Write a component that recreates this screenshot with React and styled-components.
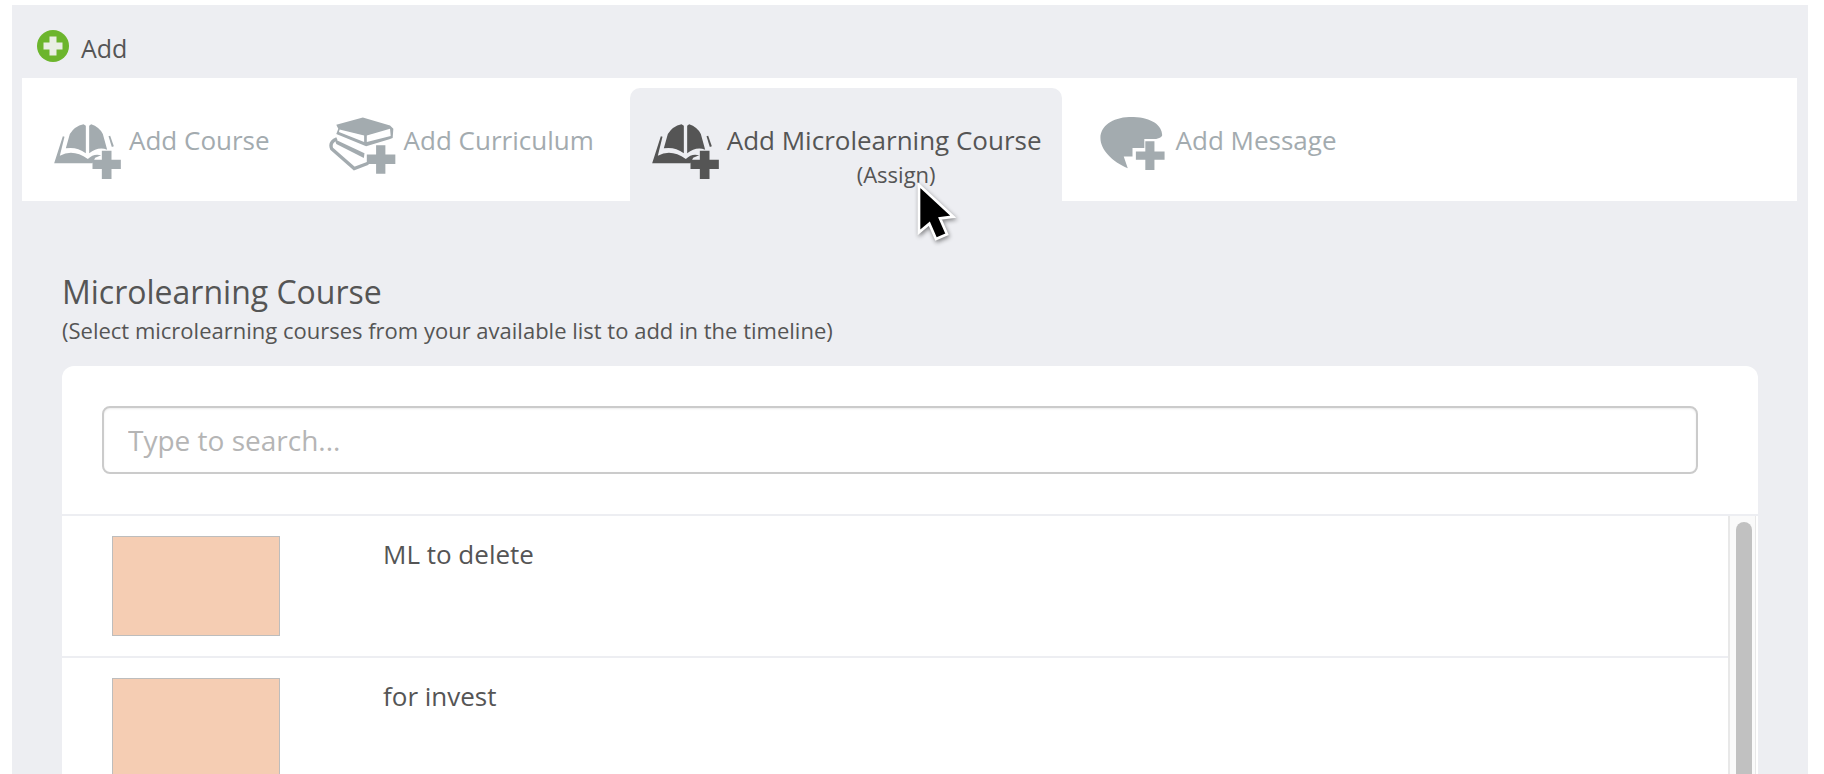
import styled, { createGlobalStyle } from "styled-components";

const GlobalStyle = createGlobalStyle`
  html, body {
    margin: 0;
    height: 100%;
    overflow: hidden;
    background: #fff;
  }
  body {
    font-family: "Open Sans", "Liberation Sans", sans-serif;
    color: #555;
  }
`;

const Page = styled.div`
  padding: 5px 16px 0 12px;
`;

const Panel = styled.div`
  background: #edeef2;
  height: 769px;
  overflow: hidden;
`;

const Header = styled.div`
  display: flex;
  align-items: flex-start;
  gap: 12px;
  height: 48px;
  padding: 25px 0 0 25px;
`;

const HeaderLabel = styled.span`
  font-size: 25px;
  line-height: 32px;
  margin-top: 2px;
`;

const TabBar = styled.div`
  display: flex;
  gap: 16px;
  height: 113px;
  margin: 0 11px 0 10px;
  padding: 10px 0 0 10px;
  background: #fff;
`;

const Tab = styled.div`
  position: relative;
  display: flex;
  padding: 37px 20px 0 22px;
  color: ${(p) => (p.$active ? "#555" : "#a3abaf")};
  background: ${(p) => (p.$active ? "#edeef2" : "transparent")};
  border-radius: 10px 10px 0 0;
`;

const TabIcon = styled.svg`
  flex: none;
  margin-top: ${(p) => p.$top}px;
  margin-right: ${(p) => p.$gap}px;
  fill: currentColor;
`;

const TabText = styled.div`
  display: flex;
  flex-direction: column;
  align-items: center;
`;

const TabTitle = styled.span`
  font-size: 26px;
  line-height: 30px;
  white-space: nowrap;
`;

const TabSub = styled.span`
  font-size: 22px;
  line-height: 24px;
  margin-top: 7px;
  padding-left: 24px;
`;

const Pointer = styled.svg`
  position: absolute;
  left: 270px;
  top: 87px;
  filter: drop-shadow(1px 2px 2px rgba(0, 0, 0, 0.45));
`;

const Section = styled.div`
  padding: 73px 50px 0;
`;

const Title = styled.h2`
  margin: 0;
  font-size: 32px;
  line-height: 36px;
  font-weight: 400;
`;

const Hint = styled.p`
  margin: 6px 0 22px;
  font-size: 22px;
  line-height: 28px;
`;

const Card = styled.div`
  background: #fff;
  border-radius: 12px 12px 0 0;
`;

const SearchArea = styled.div`
  padding: 40px 60px 40px 40px;
  border-bottom: 2px solid #edeef2;
`;

const SearchInput = styled.input`
  display: block;
  box-sizing: border-box;
  width: 100%;
  height: 68px;
  padding: 0 24px;
  border: 2px solid #cbcbcb;
  border-radius: 8px;
  box-shadow: inset 0 1px 2px rgba(0, 0, 0, 0.08);
  font: 400 28px "Open Sans", sans-serif;
  outline: none;
  &::placeholder {
    color: #b5b5b5;
    opacity: 1;
  }
`;

const ListArea = styled.div`
  display: flex;
  margin-right: 2px;
`;

const Rows = styled.div`
  flex: 1;
`;

const Row = styled.div`
  display: flex;
  gap: 103px;
  height: 142px;
  box-sizing: border-box;
  padding: 20px 0 0 50px;
  border-bottom: 2px solid #edeef2;
`;

const Thumb = styled.div`
  box-sizing: border-box;
  width: 168px;
  height: 100px;
  background: #f5cdb3;
  border: 1px solid #bdbdbd;
`;

const RowName = styled.span`
  font-size: 26px;
  line-height: 30px;
  margin-top: 3px;
`;

const Track = styled.div`
  box-sizing: border-box;
  width: 28px;
  padding: 6px 3px 0 6px;
  background: #fafafa;
  border-left: 2px solid #e8e8e8;
  border-right: 1px solid #e8e8e8;
`;

const TrackThumb = styled.div`
  height: 100%;
  background: #c1c1c1;
  border-radius: 8px;
`;

const BookIcon = () => (
  <TabIcon $top={-1} $gap={8} width="67" height="55" viewBox="45 55 200 165">
    <path d="M80 128L92 85Q106 62 133 56L140 60V143Q112 122 80 128Z" />
    <path d="M150 60L156 56Q180 64 191 85L204 132Q176 122 150 143Z" />
    <path d="M45 173L71 92L76 93L62 150Q102 128 146 160Q164 142 186 149L168 156L160 173Z" />
    <path d="M208 92L213 90L224 122L218 124Z" />
    <path d="M160 190V162H188V135H217V162H245V190H217V220H188V190Z" />
  </TabIcon>
);

const BooksIcon = () => (
  <TabIcon $top={-8} $gap={8} width="68" height="58" viewBox="25 38 205 172">
    <path d="M50 60L130 38L212 62L222 72L220 100L210 104L140 125L50 88L56 72Z" />
    <path d="M60 74L134 92V112L58 82Z" fill="#fff" />
    <path d="M142 92L212 72L214 94L142 112Z" fill="#fff" />
    <path
      d="M52 102Q28 112 36 132L104 192L146 176"
      fill="none"
      stroke="currentColor"
      strokeWidth="10"
    />
    <path d="M45 104L135 146L133 160L50 118Z" />
    <path d="M142 178V150H170V122H198V150H228V178H198V208H170V178Z" />
  </TabIcon>
);

const BubbleIcon = () => (
  <TabIcon $top={-8} $gap={11} width="65" height="53" viewBox="35 38 190 157">
    <path d="M120 38C180 36 218 60 218 92Q216 100 200 103H165V130H130V155H104L116 190C70 170 35 135 35 100C35 65 70 40 120 38Z" />
    <path d="M140 165V140H168V110H195V140H225V165H195V195H168V165Z" />
  </TabIcon>
);

const AddIcon = () => (
  <svg width="32" height="32" viewBox="0 0 32 32">
    <circle cx="16" cy="16" r="16" fill="#6cb52d" />
    <path d="M12.5 6.5h7v6h6v7h-6v6h-7v-6h-6v-7h6z" fill="#e9eee4" />
  </svg>
);

const App = () => {
  return (
    <Page>
      <GlobalStyle />
      <Panel>
        <Header>
          <AddIcon />
          <HeaderLabel>Add</HeaderLabel>
        </Header>
        <TabBar>
          <Tab>
            <BookIcon />
            <TabText>
              <TabTitle>Add Course</TabTitle>
            </TabText>
          </Tab>
          <Tab>
            <BooksIcon />
            <TabText>
              <TabTitle>Add Curriculum</TabTitle>
            </TabText>
          </Tab>
          <Tab $active>
            <BookIcon />
            <TabText>
              <TabTitle>Add Microlearning Course</TabTitle>
              <TabSub>(Assign)</TabSub>
            </TabText>
            <Pointer width="70" height="70" viewBox="0 0 210 210">
              <path
                d="M57 30L160 125L120 130L141 178L108 192L88 146L57 172Z"
                fill="#000"
                stroke="#fff"
                strokeWidth="8"
              />
            </Pointer>
          </Tab>
          <Tab>
            <BubbleIcon />
            <TabText>
              <TabTitle>Add Message</TabTitle>
            </TabText>
          </Tab>
        </TabBar>
        <Section>
          <Title>Microlearning Course</Title>
          <Hint>(Select microlearning courses from your available list to add in the timeline)</Hint>
          <Card>
            <SearchArea>
              <SearchInput placeholder="Type to search..." />
            </SearchArea>
            <ListArea>
              <Rows>
                <Row>
                  <Thumb />
                  <RowName>ML to delete</RowName>
                </Row>
                <Row>
                  <Thumb />
                  <RowName>for invest</RowName>
                </Row>
              </Rows>
              <Track>
                <TrackThumb />
              </Track>
            </ListArea>
          </Card>
        </Section>
      </Panel>
    </Page>
  );
};

export default App;
